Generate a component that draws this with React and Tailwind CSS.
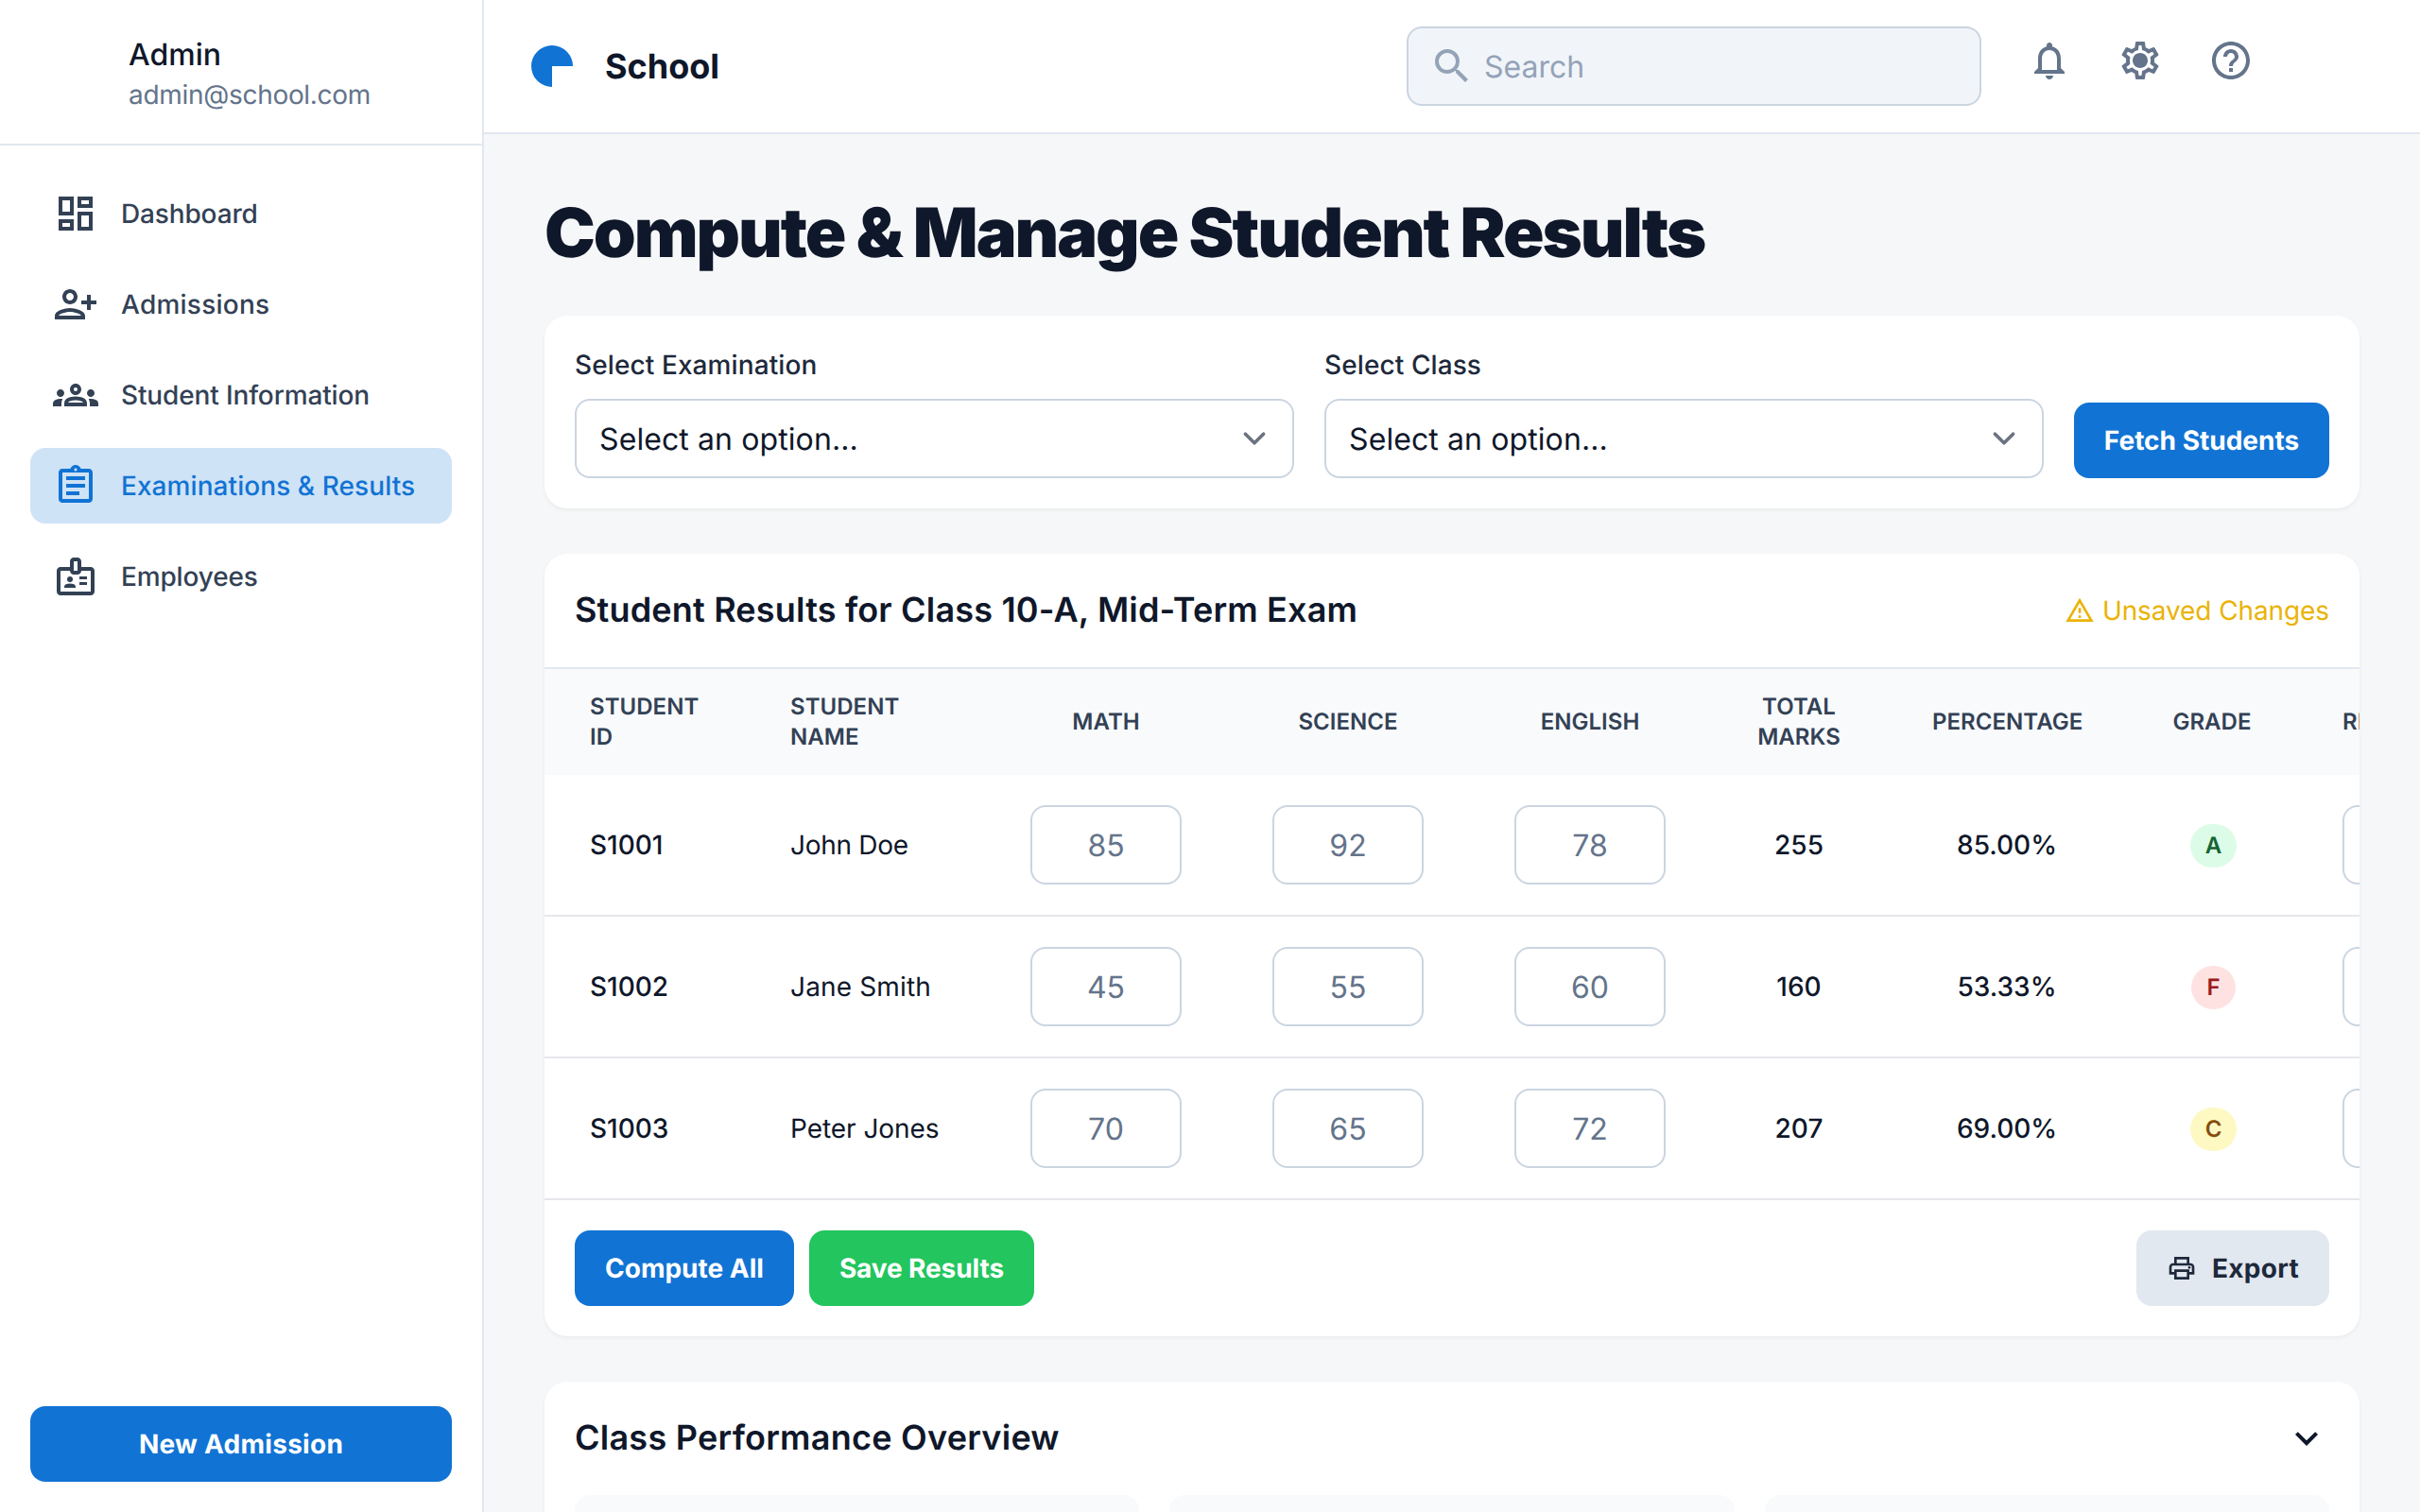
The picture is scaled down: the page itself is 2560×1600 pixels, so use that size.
import React from "react";
import {
  MdOutlineDashboard,
  MdOutlinePersonAdd,
  MdOutlineGroups,
  MdOutlineAssignment,
  MdOutlineBadge,
  MdOutlineNotifications,
  MdOutlineSettings,
  MdHelpOutline,
  MdOutlineWarningAmber,
  MdOutlinePrint,
  MdExpandMore,
  MdSearch,
} from "react-icons/md";

const nav = [
  { label: "Dashboard", Icon: MdOutlineDashboard, track: "tracking-[-0.15px]" },
  { label: "Admissions", Icon: MdOutlinePersonAdd, flip: true, track: "tracking-[0.25px]" },
  { label: "Student Information", Icon: MdOutlineGroups, track: "tracking-[-0.14px]" },
  { label: "Examinations & Results", Icon: MdOutlineAssignment, active: true, track: "tracking-[0.07px]" },
  { label: "Employees", Icon: MdOutlineBadge, track: "tracking-[-0.15px]" },
];

const students = [
  { id: "S1001", name: "John Doe", track: "tracking-[-0.3px]", marks: [85, 92, 78], total: 255, pct: "85.00%", grade: "A", badge: "bg-[#dcfce7] text-[#166534]" },
  { id: "S1002", name: "Jane Smith", track: "tracking-[0.15px]", marks: [45, 55, 60], total: 160, pct: "53.33%", grade: "F", badge: "bg-[#fee2e2] text-[#991b1b]" },
  { id: "S1003", name: "Peter Jones", track: "tracking-[-0.05px]", marks: [70, 65, 72], total: 207, pct: "69.00%", grade: "C", badge: "bg-[#fef9c3] text-[#854d0e]" },
];

function SelectBox({ label }) {
  return (
    <div className="flex-1 min-w-0">
      <div className="mb-4 text-[28px] leading-[40px] font-medium text-[#1e293b] tracking-[0.1px]">{label}</div>
      <div className="flex h-[84px] items-center justify-between rounded-2xl border-2 border-[#cbd5e1] bg-white pl-6 pr-4 text-[32px] text-[#0f172a]">
        <span className="pt-[2px] tracking-[0.1px]">Select an option...</span>
        <svg viewBox="0 0 20 20" fill="none" className="h-12 w-12">
          <path d="M6 8l4 4 4-4" stroke="#6b7280" strokeWidth="1.5" strokeLinecap="round" strokeLinejoin="round" />
        </svg>
      </div>
    </div>
  );
}

function MarkInput({ value }) {
  return (
    <div className="mx-auto flex h-[84px] w-40 items-center justify-center rounded-2xl border-2 border-[#cbd5e1] bg-white pt-[2px] text-[32px] text-[#64748b]">
      {value}
    </div>
  );
}

const thBase = "px-12 py-6 text-[24px] leading-8 font-semibold uppercase text-[#334155] tracking-[0.04px]";

export default function App() {
  return (
    <div className="flex h-screen overflow-hidden bg-[#f6f7f8] font-['Inter',sans-serif] text-[#0f172a] [text-rendering:geometricPrecision]">
      <aside className="flex h-full w-[512px] shrink-0 flex-col border-r-2 border-[#e2e8f0] bg-white">
        <div className="h-[154px] shrink-0 border-b-2 border-[#e2e8f0] pl-[136px] pt-[36px]">
          <div className="text-[32px] leading-[44px] font-medium text-[#0f172a]">Admin</div>
          <div className="text-[28px] leading-[40px] text-[#64748b] tracking-[-0.3px]">admin@school.com</div>
        </div>
        <nav className="flex flex-1 flex-col gap-4 p-8">
          {nav.map(({ label, Icon, active, flip, track }) => (
            <div
              key={label}
              className={`flex h-20 items-center gap-6 rounded-2xl px-6 text-[28px] font-medium ${
                active ? "bg-[#cfe3f6] text-[#1173d4]" : "text-[#334155]"
              }`}
            >
              <Icon className={flip ? "h-12 w-12 shrink-0 -scale-x-100" : "h-12 w-12 shrink-0"} />
              <span className={track}>{label}</span>
            </div>
          ))}
        </nav>
        <div className="p-8">
          <div className="flex h-20 items-center justify-center rounded-2xl bg-[#1173d4] text-[28px] font-bold text-white tracking-[0.27px]">
            New Admission
          </div>
        </div>
      </aside>

      <div className="flex min-w-0 flex-1 flex-col">
        <header className="flex h-[142px] shrink-0 items-center justify-between border-b-2 border-[#e2e8f0] bg-white px-12">
          <div className="flex items-center gap-8">
            <svg viewBox="0 0 48 48" className="h-12 w-12">
              <path d="M24 2a22 22 0 0 1 22 22H24v22A22 22 0 0 1 24 2Z" fill="#1173d4" />
            </svg>
            <span className="text-[36px] font-bold text-[#0f172a]">School</span>
          </div>
          <div className="flex items-center gap-10">
            <div className="flex h-[84px] w-[608px] items-center gap-[10px] rounded-2xl border-2 border-[#cbd5e1] bg-[#f1f5f9] pl-[22px] text-[32px] text-[#94a3b8]">
              <MdSearch className="h-12 w-12 shrink-0" />
              <span className="pt-[2px]">Search</span>
            </div>
            <div className="mb-3 flex items-center gap-8 text-[#64748b]">
              <div className="flex h-16 w-16 items-center justify-center"><MdOutlineNotifications className="h-12 w-12" /></div>
              <div className="relative flex h-16 w-16 items-center justify-center">
                <MdOutlineSettings className="h-12 w-12" />
                <span className="absolute left-[25px] top-[25px] h-[14px] w-[14px] rounded-full bg-[#64748b]" />
              </div>
              <div className="flex h-16 w-16 items-center justify-center"><MdHelpOutline className="h-12 w-12" /></div>
            </div>
            <div className="h-20 w-20" />
          </div>
        </header>

        <main className="flex-1 overflow-hidden p-16 pr-16">
          <h1 className="mb-12 pt-[1px] text-[72px] leading-[79px] font-black tracking-[-2.06px] text-[#0f172a]">
            Compute &amp; Manage Student Results
          </h1>

          <section className="mb-12 flex items-end gap-8 rounded-3xl bg-white p-8 shadow-[0_2px_4px_rgba(0,0,0,0.05)]">
            <SelectBox label="Select Examination" />
            <SelectBox label="Select Class" />
            <div className="flex h-20 w-[270px] shrink-0 items-center justify-center rounded-2xl bg-[#1173d4] text-[28px] font-bold text-white">
              Fetch Students
            </div>
          </section>

          <section className="mb-12 overflow-hidden rounded-3xl bg-white shadow-[0_2px_4px_rgba(0,0,0,0.05)]">
            <div className="flex h-[122px] items-center justify-between border-b-2 border-[#e2e8f0] px-8">
              <h2 className="mb-[2px] text-[36px] font-semibold text-[#0f172a] tracking-[0.18px]">Student Results for Class 10-A, Mid-Term Exam</h2>
              <div className="flex items-center gap-2 text-[28px] font-normal text-[#eab308]">
                <MdOutlineWarningAmber className="h-8 w-8" />
                <span className="tracking-[-0.1px]">Unsaved Changes</span>
              </div>
            </div>
            <div className="overflow-hidden">
              <table className="w-[2200px] table-fixed border-separate border-spacing-0">
                <colgroup>
                  <col className="w-[212px]" />
                  <col className="w-[254px]" />
                  <col className="w-[256px]" />
                  <col className="w-[256px]" />
                  <col className="w-[256px]" />
                  <col className="w-[186px]" />
                  <col className="w-[254px]" />
                  <col className="w-[180px]" />
                  <col className="w-[346px]" />
                </colgroup>
                <thead className="bg-[#f8fafc]">
                  <tr className="h-28">
                    <th className={`${thBase} text-left`}>Student ID</th>
                    <th className={`${thBase} text-left`}>Student Name</th>
                    <th className={`${thBase} text-center`}>Math</th>
                    <th className={`${thBase} text-center`}>Science</th>
                    <th className={`${thBase} text-center`}>English</th>
                    <th className={`${thBase} text-center`}>Total Marks</th>
                    <th className={`${thBase} text-center`}>Percentage</th>
                    <th className={`${thBase} text-center`}>Grade</th>
                    <th className={`${thBase} text-left`}>Remarks</th>
                  </tr>
                </thead>
                <tbody>
                  {students.map((s) => {
                    const td = "h-[150px] border-b-2 border-[#e5e7eb]";
                    return (
                      <tr key={s.id} className="text-[28px] text-[#0f172a]">
                        <td className={`${td} px-12 whitespace-nowrap font-medium`}>{s.id}</td>
                        <td className={`${td} px-12 whitespace-nowrap font-normal ${s.track}`}>{s.name}</td>
                        {s.marks.map((m, i) => (
                          <td key={i} className={`${td} px-12`}><MarkInput value={m} /></td>
                        ))}
                        <td className={`${td} px-12 text-center font-medium`}>{s.total}</td>
                        <td className={`${td} px-12 text-center font-medium`}>{s.pct}</td>
                        <td className={`${td} pl-[48px] pr-[45px] text-center`}>
                          <span className={`mt-[2px] inline-flex h-[46px] items-center rounded-full px-4 text-[24px] font-semibold ${s.badge}`}>{s.grade}</span>
                        </td>
                        <td className={`${td} px-12`}>
                          <div className="h-[84px] w-[250px] rounded-2xl border-2 border-[#cbd5e1] bg-white" />
                        </td>
                      </tr>
                    );
                  })}
                </tbody>
              </table>
            </div>
            <div className="flex h-[144px] items-center justify-between px-8">
              <div className="flex gap-4">
                <div className="flex h-20 items-center rounded-2xl bg-[#1173d4] px-8 text-[28px] font-bold text-white">Compute All</div>
                <div className="flex h-20 items-center rounded-2xl bg-[#22c55e] px-8 text-[28px] font-bold text-white tracking-[-0.1px]">Save Results</div>
              </div>
              <div className="flex h-20 items-center gap-4 rounded-2xl bg-[#e2e8f0] px-8 text-[28px] font-bold text-[#1e293b]">
                <MdOutlinePrint className="h-8 w-8" />
                <span className="tracking-[0.3px]">Export</span>
              </div>
            </div>
          </section>

          <section className="rounded-3xl bg-white p-8 shadow-[0_2px_4px_rgba(0,0,0,0.05)]">
            <div className="mb-8 flex h-14 items-center justify-between">
              <h2 className="mb-[2px] text-[36px] font-semibold text-[#0f172a] tracking-[0.25px]">Class Performance Overview</h2>
              <MdExpandMore className="h-12 w-12 text-[#0f172a]" />
            </div>
            <div className="grid grid-cols-3 gap-8">
              <div className="h-[400px] rounded-2xl bg-[#f8fafc]" />
              <div className="h-[400px] rounded-2xl bg-[#f8fafc]" />
              <div className="h-[400px] rounded-2xl bg-[#f8fafc]" />
            </div>
          </section>
        </main>
      </div>
    </div>
  );
}
